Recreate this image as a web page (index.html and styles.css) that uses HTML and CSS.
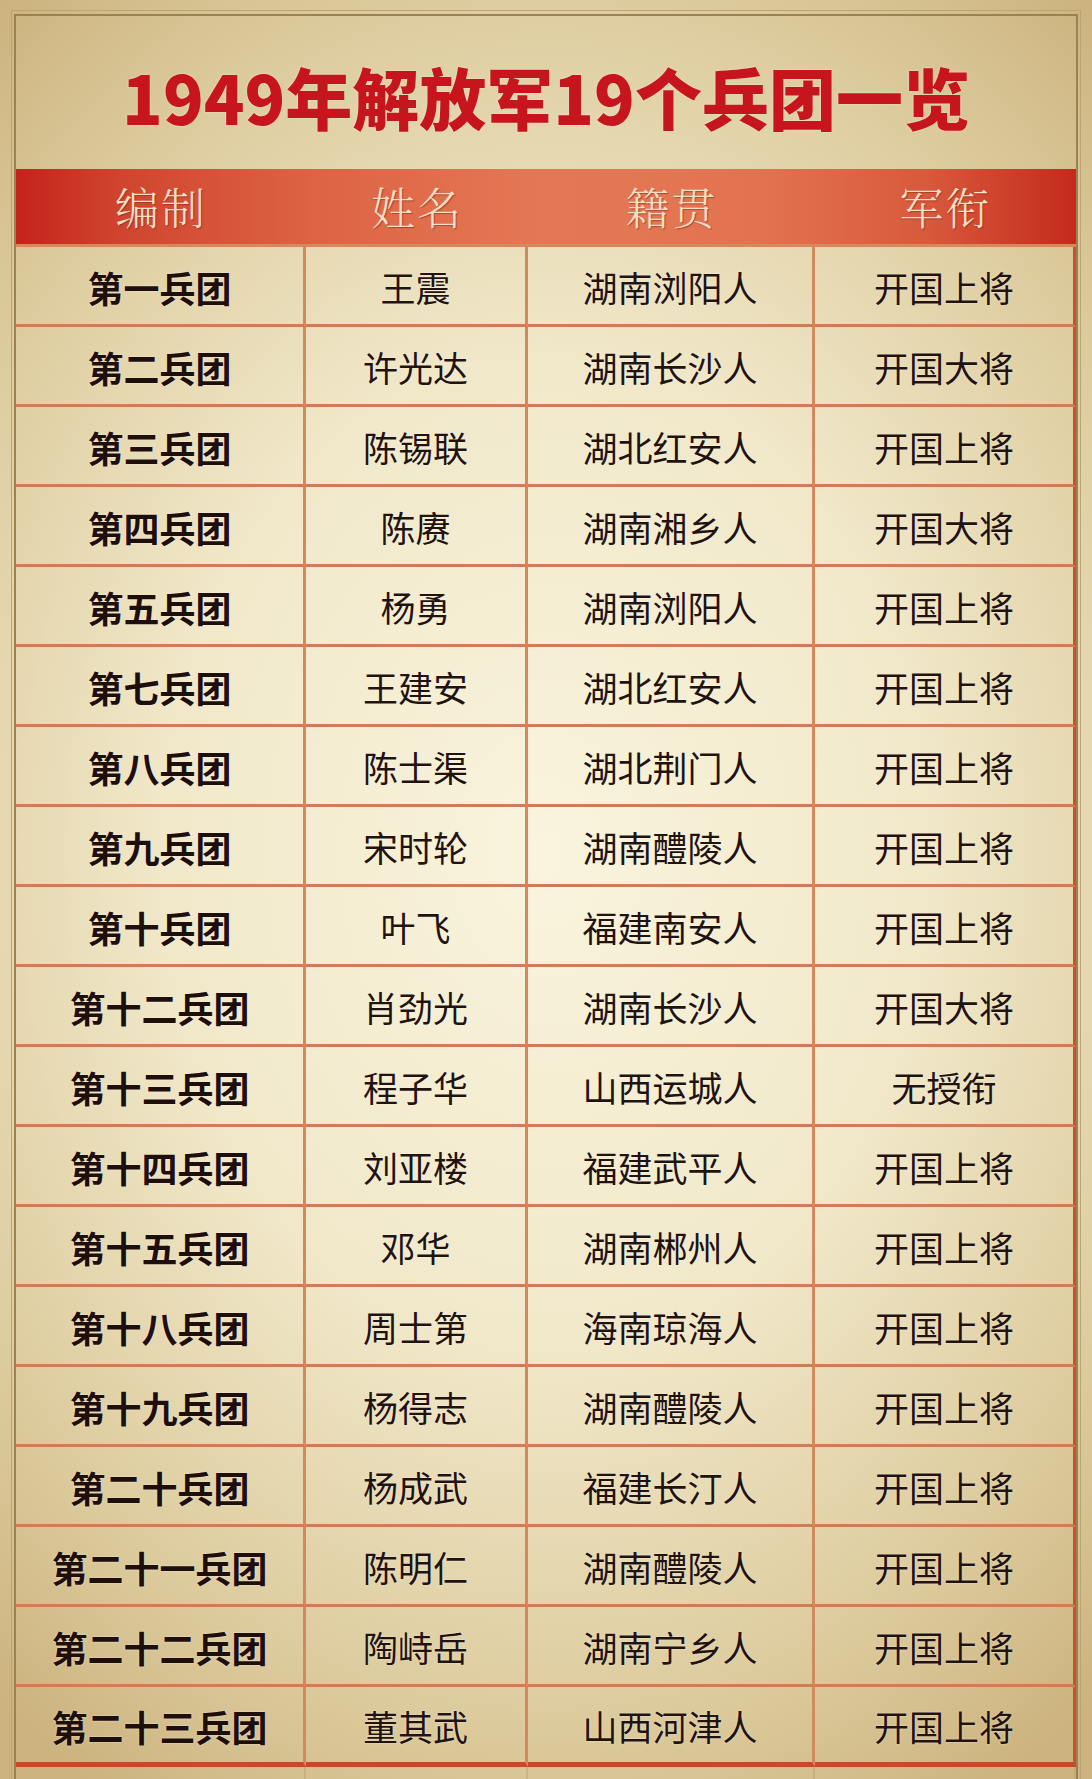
FILE: index.html
```html
<!DOCTYPE html>
<html lang="zh">
<head>
<meta charset="utf-8">
<title>1949年解放军19个兵团一览</title>
<link rel="stylesheet" href="styles.css">
</head>
<body>
<div class="page">
  <div class="outer">
    <div class="frame">
      <h1 class="title">1949年解放军19个兵团一览</h1>
      <div class="thead">
        <div class="th">编制</div><div class="th">姓名</div><div class="th">籍贯</div><div class="th">军衔</div>
      </div>
      <div class="table">
        <div class="td unit">第一兵团</div><div class="td">王震</div><div class="td">湖南浏阳人</div><div class="td last">开国上将</div>
        <div class="td unit">第二兵团</div><div class="td">许光达</div><div class="td">湖南长沙人</div><div class="td last">开国大将</div>
        <div class="td unit">第三兵团</div><div class="td">陈锡联</div><div class="td">湖北红安人</div><div class="td last">开国上将</div>
        <div class="td unit">第四兵团</div><div class="td">陈赓</div><div class="td">湖南湘乡人</div><div class="td last">开国大将</div>
        <div class="td unit">第五兵团</div><div class="td">杨勇</div><div class="td">湖南浏阳人</div><div class="td last">开国上将</div>
        <div class="td unit">第七兵团</div><div class="td">王建安</div><div class="td">湖北红安人</div><div class="td last">开国上将</div>
        <div class="td unit">第八兵团</div><div class="td">陈士渠</div><div class="td">湖北荆门人</div><div class="td last">开国上将</div>
        <div class="td unit">第九兵团</div><div class="td">宋时轮</div><div class="td">湖南醴陵人</div><div class="td last">开国上将</div>
        <div class="td unit">第十兵团</div><div class="td">叶飞</div><div class="td">福建南安人</div><div class="td last">开国上将</div>
        <div class="td unit">第十二兵团</div><div class="td">肖劲光</div><div class="td">湖南长沙人</div><div class="td last">开国大将</div>
        <div class="td unit">第十三兵团</div><div class="td">程子华</div><div class="td">山西运城人</div><div class="td last">无授衔</div>
        <div class="td unit">第十四兵团</div><div class="td">刘亚楼</div><div class="td">福建武平人</div><div class="td last">开国上将</div>
        <div class="td unit">第十五兵团</div><div class="td">邓华</div><div class="td">湖南郴州人</div><div class="td last">开国上将</div>
        <div class="td unit">第十八兵团</div><div class="td">周士第</div><div class="td">海南琼海人</div><div class="td last">开国上将</div>
        <div class="td unit">第十九兵团</div><div class="td">杨得志</div><div class="td">湖南醴陵人</div><div class="td last">开国上将</div>
        <div class="td unit">第二十兵团</div><div class="td">杨成武</div><div class="td">福建长汀人</div><div class="td last">开国上将</div>
        <div class="td unit">第二十一兵团</div><div class="td">陈明仁</div><div class="td">湖南醴陵人</div><div class="td last">开国上将</div>
        <div class="td unit">第二十二兵团</div><div class="td">陶峙岳</div><div class="td">湖南宁乡人</div><div class="td last">开国上将</div>
        <div class="td unit end">第二十三兵团</div><div class="td end">董其武</div><div class="td end">山西河津人</div><div class="td last end">开国上将</div>

        <div class="stub"></div><div class="stub"></div><div class="stub"></div><div class="stub"></div>
      </div>
    </div>
  </div>
</div>
</body>
</html>
```
FILE: styles.css
```css
html, body {
  margin: 0;
  padding: 0;
}
body {
  height: 1779px;
  overflow: hidden;
  background:
    radial-gradient(ellipse 78% 62% at 50% 48%, rgba(250,246,224,0.97) 0%, rgba(245,238,210,0.9) 45%, rgba(230,217,174,0.6) 80%, rgba(200,176,122,0) 100%),
    #ccb37f;
  font-family: "Noto Sans CJK SC", "Noto Sans", sans-serif;
}
.page {
  padding: 10px 11px 0 11px;
}
.outer {
  border: 1px solid #b8a474;
  border-bottom: none;
  padding: 3px 2px 0 2px;
}
.frame {
  border: 2px solid #9c8250;
  border-bottom: none;
}
.title {
  margin: 0;
  height: 153px;
  box-sizing: border-box;
  padding-top: 6px;
  display: flex;
  align-items: center;
  justify-content: center;
  font-family: "Noto Sans CJK SC", sans-serif;
  font-weight: 900;
  font-size: 67px;
  color: #c7151d;
  text-shadow: 0 0 2px rgba(255,240,230,0.8);
}
.thead,
.table {
  display: grid;
  grid-template-columns: 290px 222px 287px 261px;
}
.thead {
  height: 78px;
  box-sizing: border-box;
  border-bottom: 3px solid #d7895c;
  background: linear-gradient(90deg, #c4231b 0%, #d0452f 10%, #dd6344 28%, #e47856 50%, #e27350 70%, #d8593c 86%, #c42a1c 100%);
}
.th {
  display: flex;
  align-items: center;
  justify-content: center;
  font-family: "Noto Serif CJK SC", "Noto Sans CJK SC", serif;
  font-weight: 300;
  font-size: 44px;
  letter-spacing: 2px;
  color: #f4dfc6;
  text-shadow: 1px 1px 1px rgba(130,40,15,0.55);
  padding-bottom: 2px;
}
.table {
  grid-auto-rows: 80px;
}
.td {
  display: flex;
  align-items: center;
  justify-content: center;
  box-sizing: border-box;
  border-right: 3px solid #d08a5e;
  border-bottom: 3px solid #cf7e54;
  font-size: 35px;
  color: #221210;
  text-shadow: 0 0 2px rgba(255,250,235,0.7);
  padding-top: 2px;
}
.unit {
  font-weight: 700;
  font-size: 36px;
  color: #1f0f0c;
}
.last {
  border-right: 3px solid #c55331;
}
.end {
  border-bottom: 5px solid #c44a2a;
}
.stub {
  border-right: 2px solid rgba(190,160,110,0.5);
}
```
